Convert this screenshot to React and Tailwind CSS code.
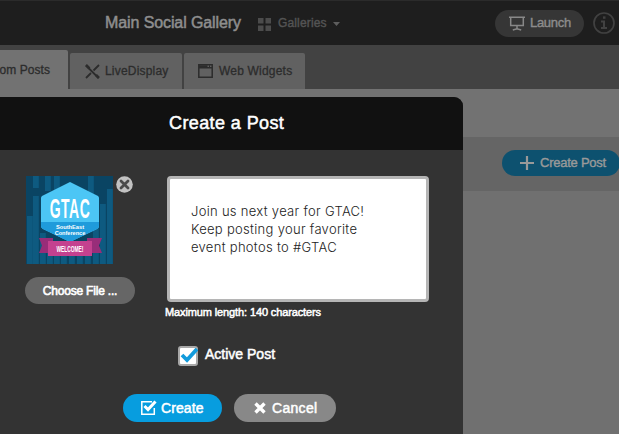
import { useState } from 'react'

const bars = [
    { x: 1, y: 40, h: 48 }, { x: 7, y: 20, h: 68 }, { x: 7, y: 0, h: 12 }, { x: 14, y: 57, h: 31 },
    { x: 19, y: 0, h: 15 }, { x: 28, y: 0, h: 24 }, { x: 21, y: 74, h: 14 }, { x: 28, y: 76, h: 12 },
    { x: 35, y: 78, h: 10 }, { x: 43, y: 78, h: 10 }, { x: 51, y: 80, h: 8 }, { x: 59, y: 76, h: 12 },
    { x: 62, y: 0, h: 25 }, { x: 67, y: 50, h: 38 }, { x: 74, y: 28, h: 60 }, { x: 81, y: 13, h: 75 },
]

function EventImage() {
    return (
        <svg viewBox="0 0 87 88" className="w-[87px] h-[88px] block">
            <rect width="87" height="88" fill="#0a4463" />
            {bars.map(bar => (
                <rect key={bar.x + '-' + bar.y} x={bar.x} y={bar.y} width="5.800" height={bar.h} fill="#0e5a80" />
            ))}
            <path d="M13 62H27V77H13L16 69.500ZM76 62H61V77H76L73 69.500Z" fill="#982d79" />
            <path d="M44 6 72 20Q73 21 73 22V50Q73 52 71 53L44 66 17 53Q15 52 15 50V22Q15 21 16 20Z" fill="#4cc6f5" />
            <path d="M15 46H73V50Q73 52 71 53L44 66 17 53Q15 52 15 50Z" fill="#1f9bdb" />
            <rect x="22" y="65" width="44" height="15" fill="#c4418f" />
            <g fill="#fff" fontFamily="Liberation Sans, sans-serif" fontWeight="700" textAnchor="middle">
                <text transform="translate(44 41.500) scale(.49 1)" fontSize="28.500" letterSpacing="1">GTAC</text>
                <text transform="translate(44 53) scale(1.080 1)" fontSize="5.300">SouthEast</text>
                <text transform="translate(44 59.300) scale(1.050 1)" fontSize="5.300">Conference</text>
                <text transform="translate(44 76) scale(.54 1)" fontSize="9">WELCOME!</text>
            </g>
        </svg>
    )
}

function TopBar() {
    return (
        <div className="h-[45px] bg-[#1e1e1e] border-t border-[#2b2b2b] flex items-center shrink-0">
            <h1 className="ml-[105px] w-[153px] text-[16px] tracking-[-0.1px] text-[#8e8e8e] [-webkit-text-stroke:0.5px_#8e8e8e]">Main Social Gallery</h1>
            <svg viewBox="0 0 13 13" className="w-[13px] h-[13px] mt-[2px]" fill="#4c4c4c">
                <path d="M0 0h5.500v5.500H0zM7.500 0H13v5.500H7.500zM0 7.500h5.500V13H0zM7.500 7.500H13V13H7.500z" />
            </svg>
            <span className="ml-[7px] w-[55px] text-[12px] tracking-[0.15px] text-[#545454] [-webkit-text-stroke:0.4px_#545454]">Galleries</span>
            <svg viewBox="0 0 7 4" className="w-[7px] h-[4px] mt-[2px]" fill="#5e5e5e">
                <path d="M0 0h7L3.500 4z" />
            </svg>
            <button className="ml-auto w-[89px] h-[27px] rounded-full bg-[#363636] flex items-center pl-[14px] text-[13px] tracking-[-0.3px] text-[#8c8c8c] [-webkit-text-stroke:0.4px_#8c8c8c]">
                <svg viewBox="0 0 16 15" className="w-[16px] h-[15px] mr-[5px]" fill="none" stroke="#888" strokeWidth="1.500">
                    <path d="M0 1.200h16M1.700 1v8.500h12.600V1M8 9.500v3M3.800 14l4.200-1.200 4.200 1.200" />
                </svg>
                Launch
            </button>
            <svg viewBox="0 0 22 22" className="w-[22px] h-[22px] ml-[9px] mr-[4px]" fill="none" stroke="#414141">
                <circle cx="11" cy="11" r="10" strokeWidth="1.700" />
                <path d="M8 9.500h3V16M8 16h6" strokeWidth="2" />
                <path d="M10 5.600h2.500" strokeWidth="2.400" />
            </svg>
        </div>
    )
}

function Tabs() {
    return (
        <div className="h-[44px] bg-[#424242] flex items-end text-[12px] tracking-[0.2px] text-[#2c2c2c] shrink-0 [-webkit-text-stroke:0.300px_#2c2c2c]">
            <div className="w-[68px] h-[39px] bg-[#727272] rounded-tr-[2px] flex items-center justify-end pr-[18px] mr-[2px]">
                <span className="whitespace-nowrap tracking-[0.05px]">om Posts</span>
            </div>
            <div className="w-[112px] h-[36px] bg-[#616161] rounded-t-[2px] flex items-center pl-[15px] mr-[2px]">
                <svg viewBox="0 0 15 15" className="w-[15px] h-[15px] mr-[5px]" fill="none" stroke="#2c2c2c">
                    <path d="M1 1.500 13.500 14" strokeWidth="1.800" />
                    <path d="M14 1 8.500 6.500M6 9 1 14" strokeWidth="1.800" />
                    <path d="M1 1l3.500 3.500M11 11l3 3" strokeWidth="2.600" />
                </svg>
                LiveDisplay
            </div>
            <div className="w-[121px] h-[36px] bg-[#616161] rounded-t-[2px] flex items-center pl-[14px]">
                <svg viewBox="0 0 15 14" className="w-[15px] h-[14px] mr-[6px]" fill="none" stroke="#2c2c2c" strokeWidth="1.500">
                    <path d="M.8.800h13.400v12.400H.8zM.8 3.800h13.400" />
                    <path d="M1 2.200h8.500M11 2.200h1" strokeWidth="2" />
                </svg>
                Web Widgets
            </div>
        </div>
    )
}

function CreatePostModal() {
    const [message, setMessage] = useState('Join us next year for GTAC!\nKeep posting your favorite\nevent photos to #GTAC')
    const [active, setActive] = useState(true)

    return (
        <div className="absolute left-0 top-[97px] w-[463px] h-[337px] bg-[#333] rounded-tr-[9px] overflow-hidden text-white">
            <div className="h-[53px] bg-[#111] flex items-center pl-[169px] text-[18px] tracking-[0.4px] [-webkit-text-stroke:0.5px_#fff]">Create a Post</div>

            <div className="flex pt-[26px] pl-[25px]">
                <div className="w-[142px]">
                    <div className="flex">
                        <div className="ml-px mr-[3px]"><EventImage /></div>
                        <svg viewBox="0 0 17 17" className="w-[17px] h-[17px]">
                            <circle cx="8.500" cy="8.500" r="8.300" fill="#c2c2c2" />
                            <path d="m5 5 7 7m0-7-7 7" stroke="#4b4b4b" strokeWidth="2.800" strokeLinecap="round" />
                        </svg>
                    </div>
                    <button className="mt-[13px] w-[110px] h-[27px] rounded-full bg-[#666] text-[12px] tracking-[-0.2px] [-webkit-text-stroke:0.6px_#fff]">Choose File ...</button>
                </div>

                <div>
                    <textarea
                        value={message}
                        onChange={(e) => setMessage(e.target.value)}
                        className="block w-[262px] h-[126px] resize-none rounded-[4px] border-3 border-[#b5b5b5] bg-white pl-[21px] pt-[23px] font-['Inter','Liberation_Sans',sans-serif] font-light text-[13px] leading-[18px] text-[#222] tracking-[0.3px] outline-none"
                    />
                    <div className="-ml-[2px] mt-[2px] text-[11px] leading-[17px] tracking-[-0.12px] [-webkit-text-stroke:0.5px_#fff]">Maximum length: 140 characters</div>
                </div>
            </div>

            <div className="flex items-center h-[20px] mt-[25px] ml-[178px] cursor-pointer" onClick={() => setActive(!active)}>
                <div className="w-[20px] h-[20px] rounded-[3px] border-2 border-[#a8a8a8] bg-white">
                    {active && (
                        <svg viewBox="0 0 18 16" className="w-[18px] h-[16px]" fill="none" stroke="#129bdc" strokeWidth="3.800">
                            <path d="m2 7 5 5L17 1" />
                        </svg>
                    )}
                </div>
                <span className="ml-[7px] -mt-[3px] text-[14px] [-webkit-text-stroke:0.5px_#fff]">Active Post</span>
            </div>

            <div className="flex mt-[28px] ml-[123px] gap-[12px] text-[14px] [-webkit-text-stroke:0.5px_#fff]">
                <button className="w-[99px] h-[28px] rounded-full bg-[#079ddf] flex items-center pl-[18px] tracking-[0.1px]">
                    <svg viewBox="0 0 16 15" className="w-[16px] h-[15px] mr-[4px] -mt-[2px]" fill="none" stroke="#fff">
                        <path d="M11 1.700H.8v12.500h12.500V8" strokeWidth="1.500" />
                        <path d="m3.500 6 3.500 3.500 7.500-8" strokeWidth="3" />
                    </svg>
                    Create
                </button>
                <button className="w-[102px] h-[28px] rounded-full bg-[#888] flex items-center pl-[20px] tracking-[0.3px]">
                    <svg viewBox="0 0 12 12" className="w-[12px] h-[12px] mr-[6px]" stroke="#fff" strokeWidth="3.400">
                        <path d="m1.500 1.500 9 9m0-9-9 9" />
                    </svg>
                    Cancel
                </button>
            </div>
        </div>
    )
}

export default function App() {
    return (
        <div className="relative w-[619px] h-[435px] overflow-hidden bg-white font-['Liberation_Sans',Arial,sans-serif]">
            <div className="h-[434px] bg-[#707070] flex flex-col">
                <TopBar />
                <Tabs />
                <div className="h-[48px] bg-[#727272] shrink-0"></div>
                <div className="h-[54px] bg-[#656565] flex items-center justify-end overflow-hidden shrink-0">
                    <button className="w-[118px] -mr-[1px] h-[26px] mb-[2px] rounded-full bg-[#0d516f] flex items-center pl-[18px] text-[13px] tracking-[-0.25px] text-[#999] whitespace-nowrap [-webkit-text-stroke:0.4px_#999]">
                        <svg viewBox="0 0 14 14" className="w-[14px] h-[14px] mr-[6px]" stroke="#999" strokeWidth="2.200">
                            <path d="M7 0v14M0 7h14" />
                        </svg>
                        Create Post
                    </button>
                </div>
            </div>
            <CreatePostModal />
        </div>
    )
}
